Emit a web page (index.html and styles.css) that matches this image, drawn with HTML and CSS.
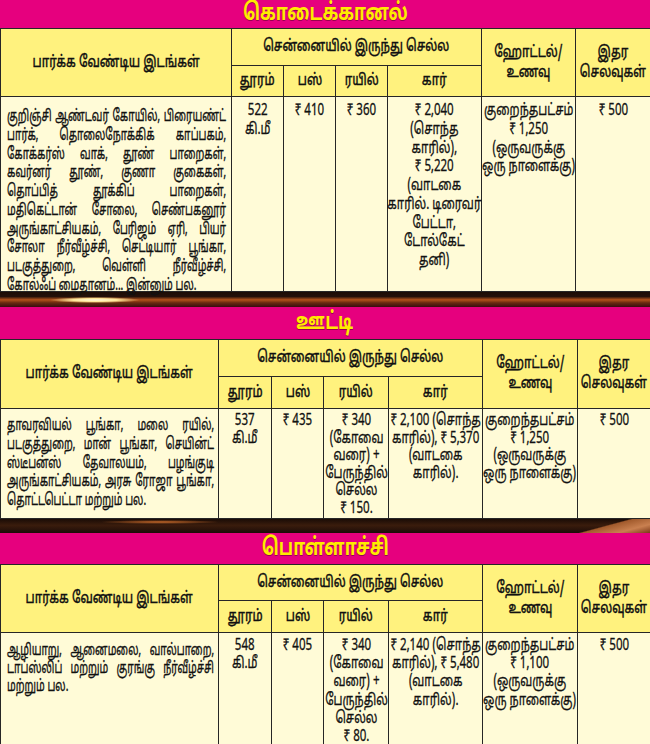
FILE: index.html
```html
<!DOCTYPE html>
<html lang="ta">
<head>
<meta charset="utf-8">
<link rel="stylesheet" href="styles.css">
</head>
<body>
<div class="page">

  <section class="place place-a">
    <div class="place-title"><span class="tt">கொடைக்கானல்</span></div>
    <table class="grid grid-a">
      <colgroup><col class="c1"><col class="c2"><col class="c3"><col class="c4"><col class="c5"><col class="c6"><col class="c7"></colgroup>
      <thead>
        <tr class="h1">
          <th rowspan="2"><div class="fit"><span class="hq">பார்க்க வேண்டிய இடங்கள்</span></div></th>
          <th colspan="4"><div class="fit"><span class="hq">சென்னையில் இருந்து செல்ல</span></div></th>
          <th rowspan="2"><div class="fit"><span class="hq">ஹோட்டல்/<br>உணவு</span></div></th>
          <th rowspan="2"><div class="fit"><span class="hq">இதர<br>செலவுகள்</span></div></th>
        </tr>
        <tr class="h2">
          <th><div class="fit"><span class="hq">தூரம்</span></div></th>
          <th><div class="fit"><span class="hq">பஸ்</span></div></th>
          <th><div class="fit"><span class="hq">ரயில்</span></div></th>
          <th><div class="fit"><span class="hq">கார்</span></div></th>
        </tr>
      </thead>
      <tbody>
        <tr class="body">
          <td class="places">
            <div class="lines">
              <span class="jl">குறிஞ்சி ஆண்டவர் கோயில், பிரையண்ட்</span>
              <span class="jl">பார்க், தொலைநோக்கிக் காப்பகம்,</span>
              <span class="jl">கோக்கர்ஸ் வாக், தூண் பாறைகள்,</span>
              <span class="jl">கவர்னர் தூண், குணா குகைகள்,</span>
              <span class="jl">தொப்பித் தூக்கிப் பாறைகள்,</span>
              <span class="jl">மதிகெட்டான் சோலை, செண்பகனூர்</span>
              <span class="jl">அருங்காட்சியகம், பேரிஜம் ஏரி, பியர்</span>
              <span class="jl">சோலா நீர்வீழ்ச்சி, செட்டியார் பூங்கா,</span>
              <span class="jl">படகுத்துறை, வெள்ளி நீர்வீழ்ச்சி,</span>
              <span class="ll">கோல்ஃப் மைதானம்... இன்னும் பல.</span>
            </div>
          </td>
          <td><div class="fit"><span class="sq">522<br>கி.மீ</span></div></td>
          <td><div class="fit"><span class="sq">₹ 410</span></div></td>
          <td><div class="fit"><span class="sq">₹ 360</span></div></td>
          <td><div class="fit"><span class="sq">₹ 2,040<br>(சொந்த<br>காரில்),<br>₹ 5,220<br>(வாடகை<br>காரில். டிரைவர்<br>பேட்டா,<br>டோல்கேட்<br>தனி)</span></div></td>
          <td><div class="fit"><span class="sq">குறைந்தபட்சம்<br>₹ 1,250<br>(ஒருவருக்கு<br>ஒரு நாளைக்கு)</span></div></td>
          <td><div class="fit"><span class="sq">₹ 500</span></div></td>
        </tr>
      </tbody>
    </table>
  </section>

  <div class="divider divider-glow"></div>

  <section class="place place-b">
    <div class="place-title"><span class="tt">ஊட்டி</span></div>
    <table class="grid grid-b">
      <colgroup><col class="c1"><col class="c2"><col class="c3"><col class="c4"><col class="c5"><col class="c6"><col class="c7"></colgroup>
      <thead>
        <tr class="h1">
          <th rowspan="2"><div class="fit"><span class="hq">பார்க்க வேண்டிய இடங்கள்</span></div></th>
          <th colspan="4"><div class="fit"><span class="hq">சென்னையில் இருந்து செல்ல</span></div></th>
          <th rowspan="2"><div class="fit"><span class="hq">ஹோட்டல்/<br>உணவு</span></div></th>
          <th rowspan="2"><div class="fit"><span class="hq">இதர<br>செலவுகள்</span></div></th>
        </tr>
        <tr class="h2">
          <th><div class="fit"><span class="hq">தூரம்</span></div></th>
          <th><div class="fit"><span class="hq">பஸ்</span></div></th>
          <th><div class="fit"><span class="hq">ரயில்</span></div></th>
          <th><div class="fit"><span class="hq">கார்</span></div></th>
        </tr>
      </thead>
      <tbody>
        <tr class="body">
          <td class="places">
            <div class="lines">
              <span class="jl">தாவரவியல் பூங்கா, மலை ரயில்,</span>
              <span class="jl">படகுத்துறை, மான் பூங்கா, செயின்ட்</span>
              <span class="jl">ஸ்டீபன்ஸ் தேவாலயம், பழங்குடி</span>
              <span class="jl">அருங்காட்சியகம், அரசு ரோஜா பூங்கா,</span>
              <span class="ll">தொட்டபெட்டா மற்றும் பல.</span>
            </div>
          </td>
          <td><div class="fit"><span class="sq">537<br>கி.மீ</span></div></td>
          <td><div class="fit"><span class="sq">₹ 435</span></div></td>
          <td><div class="fit"><span class="sq">₹ 340<br>(கோவை<br>வரை) +<br>பேருந்தில்<br>செல்ல<br>₹ 150.</span></div></td>
          <td><div class="fit"><span class="sq">₹ 2,100 (சொந்த<br>காரில்), ₹ 5,370<br>(வாடகை<br>காரில்).</span></div></td>
          <td><div class="fit"><span class="sq">குறைந்தபட்சம்<br>₹ 1,250<br>(ஒருவருக்கு<br>ஒரு நாளைக்கு)</span></div></td>
          <td><div class="fit"><span class="sq">₹ 500</span></div></td>
        </tr>
      </tbody>
    </table>
  </section>

  <div class="divider divider-wood"></div>

  <section class="place place-c">
    <div class="place-title"><span class="tt">பொள்ளாச்சி</span></div>
    <table class="grid grid-b">
      <colgroup><col class="c1"><col class="c2"><col class="c3"><col class="c4"><col class="c5"><col class="c6"><col class="c7"></colgroup>
      <thead>
        <tr class="h1">
          <th rowspan="2"><div class="fit"><span class="hq">பார்க்க வேண்டிய இடங்கள்</span></div></th>
          <th colspan="4"><div class="fit"><span class="hq">சென்னையில் இருந்து செல்ல</span></div></th>
          <th rowspan="2"><div class="fit"><span class="hq">ஹோட்டல்/<br>உணவு</span></div></th>
          <th rowspan="2"><div class="fit"><span class="hq">இதர<br>செலவுகள்</span></div></th>
        </tr>
        <tr class="h2">
          <th><div class="fit"><span class="hq">தூரம்</span></div></th>
          <th><div class="fit"><span class="hq">பஸ்</span></div></th>
          <th><div class="fit"><span class="hq">ரயில்</span></div></th>
          <th><div class="fit"><span class="hq">கார்</span></div></th>
        </tr>
      </thead>
      <tbody>
        <tr class="body">
          <td class="places">
            <div class="lines">
              <span class="jl">ஆழியாறு, ஆனைமலை, வால்பாறை,</span>
              <span class="jl">டாப்ஸ்லிப் மற்றும் குரங்கு நீர்வீழ்ச்சி</span>
              <span class="ll">மற்றும் பல.</span>
            </div>
          </td>
          <td><div class="fit"><span class="sq">548<br>கி.மீ</span></div></td>
          <td><div class="fit"><span class="sq">₹ 405</span></div></td>
          <td><div class="fit"><span class="sq">₹ 340<br>(கோவை<br>வரை) +<br>பேருந்தில்<br>செல்ல<br>₹ 80.</span></div></td>
          <td><div class="fit"><span class="sq">₹ 2,140 (சொந்த<br>காரில்), ₹ 5,480<br>(வாடகை<br>காரில்).</span></div></td>
          <td><div class="fit"><span class="sq">குறைந்தபட்சம்<br>₹ 1,100<br>(ஒருவருக்கு<br>ஒரு நாளைக்கு)</span></div></td>
          <td><div class="fit"><span class="sq">₹ 500</span></div></td>
        </tr>
      </tbody>
    </table>
  </section>

</div>
</body>
</html>
```
FILE: styles.css
```css
* { box-sizing: border-box; }

html, body { margin: 0; padding: 0; }

body {
  width: 650px;
  height: 744px;
  overflow: hidden;
  background: #2a140a;
  font-family: "Noto Sans Tamil", "Noto Sans", "DejaVu Sans", sans-serif;
  color: #111;
}

.page { width: 650px; }

/* magenta title bars */
.place-title {
  display: flex;
  justify-content: center;
  align-items: center;
  background: #e6007e;
}

.place-a .place-title { height: 28px; }
.place-b .place-title { height: 32px; }
.place-c .place-title { height: 31px; }

.tt {
  display: block;
  color: #ffeb00;
  font-weight: bold;
  font-size: 24px;
  line-height: 26px;
  white-space: nowrap;
  text-shadow: 0 1px 0 #9a0050;
  transform: scaleX(0.72);
  transform-origin: 50% 50%;
}

/* tables */
.grid {
  width: 650px;
  border-collapse: collapse;
  table-layout: fixed;
}

.grid th,
.grid td {
  border: 1px solid #262626;
  padding: 0;
}

.grid th {
  background: #fff27e;
  font-weight: 500;
  font-size: 16px;
  line-height: 20px;
  vertical-align: middle;
}

.grid td {
  background: #fffbd7;
  font-size: 16px;
  vertical-align: top;
}

.fit {
  display: flex;
  justify-content: center;
}

.hq,
.sq {
  display: block;
  white-space: nowrap;
  text-align: center;
  transform-origin: 50% 0;
  -webkit-text-stroke: 0.3px #111;
}

.hq { transform: scaleX(0.72); }
.sq { transform: scaleX(0.72); }

.lines {
  transform: scaleX(0.635);
  transform-origin: 0 0;
  -webkit-text-stroke: 0.35px #111;
}

.grid-a .lines { width: 345px; height: 180px; line-height: 18.75px; }
.grid-b .lines { width: 326px; }
.place-b .lines { line-height: 18.75px; }
.place-c .lines { line-height: 18px; }

.jl,
.ll {
  display: block;
  white-space: nowrap;
}

.jl {
  text-align: justify;
  text-align-last: justify;
}

.ll { text-align: left; }

/* vertical rhythm of the body rows */
.place-a td { padding-top: 5px; line-height: 18.75px; }
.place-b td { padding-top: 4px; line-height: 17.5px; }
.place-c td { padding-top: 4px; line-height: 18.2px; }

.grid td.places { padding-left: 6px; }
.place-a td.places { padding-top: 11px; }
.place-b td.places { padding-top: 8px; }
.place-c td.places { padding-top: 9px; }

/* section 1 columns */
.grid-a .c1 { width: 231px; }
.grid-a .c2 { width: 52px; }
.grid-a .c3 { width: 52px; }
.grid-a .c4 { width: 52px; }
.grid-a .c5 { width: 94px; }
.grid-a .c6 { width: 94px; }
.grid-a .c7 { width: 75px; }

/* section 2 & 3 columns */
.grid-b .c1 { width: 218px; }
.grid-b .c2 { width: 53px; }
.grid-b .c3 { width: 52px; }
.grid-b .c4 { width: 65px; }
.grid-b .c5 { width: 94px; }
.grid-b .c6 { width: 95px; }
.grid-b .c7 { width: 73px; }

.place-a .h1 th { height: 37px; }
.place-a .h2 th { height: 31px; }
.place-a .body td { height: 195px; }

.place-b .h1 th { height: 37px; }
.place-b .h2 th { height: 32px; }
.place-b .body td { height: 109px; }

.place-c .h1 th { height: 36px; }
.place-c .h2 th { height: 32px; }
.place-c .body td { height: 120px; }

/* decorative strips between the tables */
.divider-glow {
  height: 15px;
  background:
    radial-gradient(ellipse 45px 3px at 95px 8px, #fffbe0 0%, #ffe79a 50%, rgba(255, 180, 80, 0) 100%),
    linear-gradient(to bottom, #1c0d06 0%, #24110a 30%, #b4521c 52%, #6a2a10 72%, #3a0c10 100%);
}

.divider-wood {
  height: 14px;
  background:
    linear-gradient(165deg, rgba(0,0,0,0) 55%, #a15a2c 58%, #c98050 80%, #7a3818 100%) right / 110px 14px no-repeat,
    radial-gradient(ellipse 60px 2px at 160px 3px, #c86a2a 0%, rgba(200, 106, 42, 0) 100%),
    linear-gradient(to bottom, #1a0c06 0%, #3a1c0c 45%, #1c0c08 100%);
}
```
